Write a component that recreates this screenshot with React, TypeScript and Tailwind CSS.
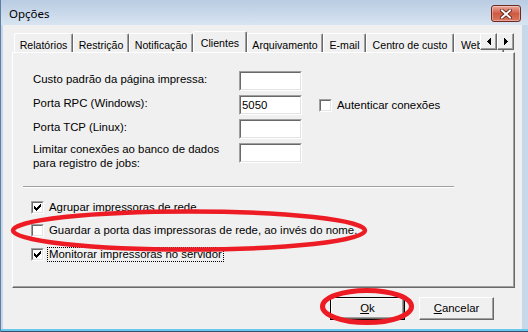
import React from "react";

const TABS = [
  { label: "Relatórios", w: "w-[59px]" },
  { label: "Restrição", w: "w-[56px]" },
  { label: "Notificação", w: "w-[64px]" },
  { label: "Clientes", w: "w-[54px]", active: true },
  { label: "Arquivamento", w: "w-[76px]" },
  { label: "E-mail", w: "w-[43px]" },
  { label: "Centro de custo", w: "w-[88px]" },
  { label: "Web", w: "w-[50px] text-left pl-[6px]" },
];

function Check() {
  // classic 7x7 tick, drawn pixel by pixel
  const cols = [
    [1, 3],
    [2, 4],
    [3, 5],
    [4, 4],
    [5, 3],
    [6, 2],
    [7, 1],
  ];
  return (
    <svg width="9" height="9" viewBox="0 0 9 9" shapeRendering="crispEdges">
      {cols.map(([x, y]) => (
        <rect key={x} x={x} y={y} width="1" height="3" fill="#000" />
      ))}
    </svg>
  );
}

function Box({ checked }: { checked?: boolean }) {
  return (
    <span className="block w-[13px] h-[13px] shrink-0 border border-t-[#a0a0a0] border-l-[#a0a0a0] border-b-white border-r-white">
      <span className="block w-full h-full border border-t-[#696969] border-l-[#696969] border-b-[#e3e3e3] border-r-[#e3e3e3] bg-white">
        {checked && <Check />}
      </span>
    </span>
  );
}

function Field({ value }: { value?: string }) {
  return (
    <div className="w-[63px] h-[20px] shrink-0 border border-t-[#a0a0a0] border-l-[#a0a0a0] border-b-white border-r-white">
      <div className="h-full border border-t-[#696969] border-l-[#696969] border-b-[#e3e3e3] border-r-[#e3e3e3] bg-white pl-px leading-[16px]">
        {value}
      </div>
    </div>
  );
}

function Arrow({ dir }: { dir: "left" | "right" }) {
  return (
    <div className="w-[17px] h-[17px] border border-t-white border-l-white border-b-[#696969] border-r-[#696969] shadow-[inset_-1px_-1px_0_#a0a0a0] bg-[#f0f0f0] flex items-center justify-center">
      <svg width="4" height="7" viewBox="0 0 4 7" shapeRendering="crispEdges">
        {dir === "left" ? (
          <path d="M4 0 L4 7 L0 3.5 Z" fill="#000" />
        ) : (
          <path d="M0 0 L0 7 L4 3.5 Z" fill="#000" />
        )}
      </svg>
    </div>
  );
}

function TabStrip() {
  return (
    <div className="relative h-[21px] flex items-end pl-[2px] overflow-hidden">
      {TABS.map((t) =>
        t.active ? (
          <div
            key={t.label}
            className={`${t.w} shrink-0 h-[22px] -mb-px relative z-10 bg-[#f0f0f0] border-l border-t border-r border-l-white border-t-white border-r-[#696969] shadow-[inset_-1px_0_0_#a0a0a0] rounded-t-[2px] text-center pt-[4px] leading-[14px] text-[10.6px]`}
          >
            {t.label}
          </div>
        ) : (
          <div
            key={t.label}
            className={`text-center ${t.w} shrink-0 h-[19px] border-l border-t border-r border-l-white border-t-white border-r-[#696969] shadow-[inset_-1px_0_0_#a0a0a0] rounded-t-[2px] pt-[4px] leading-[14px] text-[10.6px] whitespace-nowrap overflow-hidden`}
          >
            {t.label}
          </div>
        )
      )}
      <div className="absolute right-px top-[2px] flex">
        <Arrow dir="left" />
        <Arrow dir="right" />
      </div>
    </div>
  );
}

function ClientesPanel() {
  return (
    <div className="h-[236px] border border-t-white border-l-white border-r-[#696969] border-b-[#696969] shadow-[inset_-1px_-1px_0_#a0a0a0] bg-[#f0f0f0] pt-[18px] text-[11.4px]">
      <div className="flex flex-col gap-[4px] pl-[20px]">
        <div className="flex h-[20px]">
          <div className="w-[206px] pt-px leading-[14px]">Custo padrão da página impressa:</div>
          <Field />
        </div>
        <div className="flex h-[20px]">
          <div className="w-[206px] pt-px leading-[14px]">Porta RPC (Windows):</div>
          <Field value="5050" />
          <div className="flex items-center gap-[5px] ml-[17px]">
            <Box />
            <span className="leading-[13px]">Autenticar conexões</span>
          </div>
        </div>
        <div className="flex h-[20px]">
          <div className="w-[206px] pt-px leading-[14px]">Porta TCP (Linux):</div>
          <Field />
        </div>
        <div className="flex">
          <div className="w-[206px] -mt-px leading-[14px]">
            Limitar conexões ao banco de dados
            <br />
            para registro de jobs:
          </div>
          <Field />
        </div>
      </div>

      <div className="ml-[10px] mt-[16px] w-[431px] h-[2px] border-t border-t-[#a0a0a0] border-b border-b-white" />

      <div className="flex flex-col pl-[18px]">
        <div className="flex items-center gap-[5px] h-[13px] mt-[13px]">
          <Box checked />
          <span className="leading-[13px]">Agrupar impressoras de rede.</span>
        </div>
        <div className="flex items-center gap-[5px] h-[13px] mt-[10px]">
          <Box />
          <span className="leading-[13px]">Guardar a porta das impressoras de rede, ao invés do nome.</span>
        </div>
        <div className="flex items-center gap-[3px] h-[13px] mt-[11px]">
          <Box checked />
          <span className="leading-[13px] border border-dotted border-black px-px">
            Monitorar impressoras no servidor
          </span>
        </div>
      </div>
    </div>
  );
}

function Button({ children, isDefault }: { children: React.ReactNode; isDefault?: boolean }) {
  return (
    <div
      className={`w-[75px] h-[23px] ${isDefault ? "border border-black" : ""}`}
    >
      <div className="h-full border border-t-white border-l-white border-b-[#696969] border-r-[#696969] shadow-[inset_-1px_-1px_0_#a0a0a0] bg-[#f0f0f0] flex items-center justify-center text-[11.4px] leading-[13px]">
        {children}
      </div>
    </div>
  );
}

function TitleBar() {
  return (
    <div className="h-[25px] shrink-0 flex items-start justify-between pl-2 pr-[7px] pt-[5px] bg-gradient-to-b from-[#b9cce2] to-[#d8e4f1]">
      <span className="font-['Noto_Sans',sans-serif] text-[11.5px] leading-[17px] text-black">Opções</span>
      <div className="w-[30px] h-[17px] rounded-[3px] border border-[#6e2a22] bg-gradient-to-b from-[#e9a99b] via-[#cf5a43] to-[#d9765e] shadow-[inset_0_0_0_1px_rgba(255,255,255,0.35)] flex items-center justify-center">
        <svg width="12" height="10" viewBox="0 0 12 10">
          <path d="M2 1.5 L10 8.5 M10 1.5 L2 8.5" stroke="#5b1c14" strokeWidth="3.6" strokeLinecap="square" />
          <path d="M2 1.5 L10 8.5 M10 1.5 L2 8.5" stroke="#ffffff" strokeWidth="2" strokeLinecap="square" />
        </svg>
      </div>
    </div>
  );
}

export default function App() {
  return (
    <div className="relative w-[528px] h-[332px] overflow-hidden flex flex-col bg-[#c7d8ea] border-l border-l-[#5d7fa6] font-['Liberation_Sans',Arial,sans-serif] text-black">
      <TitleBar />
      <div className="flex-1 flex pl-[2px] pr-[6px] pb-[3px] shadow-[inset_0_-1px_0_#33506e,inset_0_-3px_0_#6cc7ec]">
        <div className="flex-1 bg-[#f0f0f0] flex flex-col pl-[9px] pt-[6px]">
          <div className="w-[503px] flex flex-col">
            <TabStrip />
            <ClientesPanel />
          </div>
          <div className="flex justify-end gap-[14px] pr-[28px] mt-[9px]">
            <Button isDefault>
              <span>
                <span className="underline">O</span>k
              </span>
            </Button>
            <Button>
              <span>
                <span className="underline">C</span>ancelar
              </span>
            </Button>
          </div>
        </div>
      </div>

      {/* red annotation marks drawn over the dialog */}
      <svg className="absolute inset-0 pointer-events-none" width="528" height="332" viewBox="0 0 528 332">
        <ellipse cx="188" cy="230.5" rx="176" ry="19" fill="none" stroke="#ed1c24" strokeWidth="4.5" />
        <ellipse cx="366" cy="306.5" rx="44.5" ry="16" fill="none" stroke="#ed1c24" strokeWidth="5" />
      </svg>
    </div>
  );
}
